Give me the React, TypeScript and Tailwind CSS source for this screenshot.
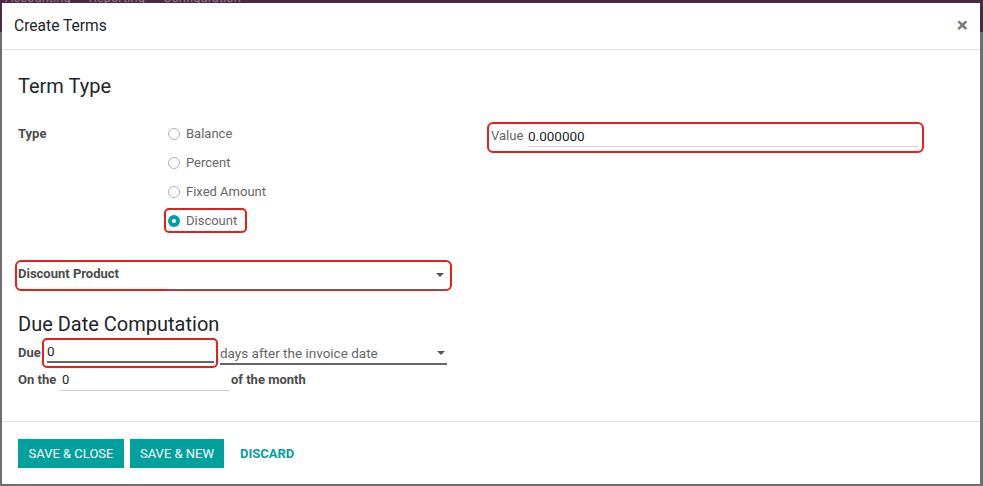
import React from "react";

const TEAL = "#00a09d";

function Radio({ label, checked = false }: { label: string; checked?: boolean }) {
  return (
    <div className="flex items-center gap-[6px]">
      {checked ? (
        <span className="w-[12px] h-[12px] rounded-full bg-[#00a09d] flex items-center justify-center">
          <span className="w-[4px] h-[4px] rounded-full bg-white" />
        </span>
      ) : (
        <span className="w-[12px] h-[12px] rounded-full border border-[#adb5bd] bg-white" />
      )}
      <span className="text-[#666666]">{label}</span>
    </div>
  );
}

function Caret() {
  return (
    <span className="w-0 h-0 border-l-[4px] border-r-[4px] border-t-[4px] border-l-transparent border-r-transparent border-t-[#555]" />
  );
}

export default function App() {
  return (
    <div className="relative w-full h-[486px] overflow-hidden bg-[#6f6f6f] font-['Roboto',sans-serif] text-[13px]">
      {/* app navbar behind the dialog */}
      <div className="h-[32px] bg-[#4a2a42] flex gap-[18px] pl-[5px] text-[13px] text-[#8f7b89] leading-none">
        <span className="-mt-[9px]">Accounting</span>
        <span className="-mt-[9px]">Reporting</span>
        <span className="-mt-[9px]">Configuration</span>
      </div>

      {/* dialog */}
      <div className="absolute left-[2px] top-[3px] w-[978px] h-[481px] bg-white flex flex-col">
        {/* header */}
        <div className="h-[47px] shrink-0 flex items-center justify-between pl-[12px] pr-[12px] pt-[2px] border-b border-[#dee2e6]">
          <span className="text-[15.6px] text-[#212529]">Create Terms</span>
          <span className="text-[21px] font-bold text-[#7a7a7a] leading-none -mt-[4px]">×</span>
        </div>

        {/* body */}
        <div className="flex-1 pl-[13px] pt-[24px]">
          <div className="h-[24px] flex items-center pl-[3px] text-[20px] text-[#212529]">Term Type</div>

          <div className="mt-[21px] flex">
            <div className="w-[472px] flex">
              <div className="w-[153px] pl-[3px] h-[29px] flex items-center font-bold text-[#4c4c4c]">Type</div>
              <div className="flex flex-col">
                <div className="h-[29px] flex items-center"><Radio label="Balance" /></div>
                <div className="h-[29px] flex items-center"><Radio label="Percent" /></div>
                <div className="h-[29px] flex items-center"><Radio label="Fixed Amount" /></div>
                <div className="h-[29px] flex items-center">
                  <div className="-ml-[4px] h-[25px] w-[83px] pl-[2px] flex items-center border-2 border-[#e3201c] rounded-[5px]">
                    <Radio label="Discount" checked />
                  </div>
                </div>
              </div>
            </div>
            <div className="mt-[3px] w-[437px] h-[31px] flex items-center pl-[2px] pr-[4px] border-2 border-[#e3201c] rounded-[6px]">
              <span className="w-[37px] text-[#666666] -mt-[3px]">Value</span>
              <div className="flex-1 h-[20px] flex items-center border-b border-[#cfcfcf] text-[#212529] text-[13.5px] -mt-[1px]">0.000000</div>
            </div>
          </div>

          {/* discount product */}
          <div className="mt-[25px] w-[437px] h-[31px] flex items-center pl-[1px] pr-[4px] border-2 border-[#e3201c] rounded-[6px]">
            <span className="w-[150px] font-bold text-[#4c4c4c] -mt-[4px]">Discount Product</span>
            <div className="flex-1 h-[24px] mt-[4px] flex items-start justify-end pr-[2px] pt-[7px] border-b border-[#666]">
              <Caret />
            </div>
          </div>

          <div className="mt-[21px] h-[24px] flex items-center pl-[3px] text-[20px] text-[#212529]">Due Date Computation</div>

          {/* due row */}
          <div className="mt-[2px] flex items-center">
            <span className="pl-[3px] w-[27px] font-bold text-[#4c4c4c]">Due</span>
            <div className="w-[176px] h-[30px] flex items-center pl-[3px] pr-[2px] border-2 border-[#e3201c] rounded-[5px]">
              <div className="flex-1 h-[21px] flex items-center border-b-2 border-[#666] text-[#212529] text-[13.5px] -mt-[2px]">0</div>
            </div>
            <div className="ml-[2px] w-[227px] h-[21px] flex items-center justify-between pr-[2px] border-b-2 border-[#666] text-[#666666] text-[13.5px] mt-[2px]">
              <span>days after the invoice date</span>
              <Caret />
            </div>
          </div>

          {/* on the row */}
          <div className="mt-[1px] flex items-center h-[22px]">
            <span className="pl-[3px] w-[45px] font-bold text-[#4c4c4c]">On the</span>
            <div className="w-[169px] h-[20px] flex items-center pl-[2px] border-b border-[#cfcfcf] text-[#212529] mt-[1px]">0</div>
            <span className="ml-[2px] font-bold text-[#4c4c4c]">of the month</span>
          </div>
        </div>

        {/* footer */}
        <div className="h-[63px] shrink-0 border-t border-[#dee2e6] flex items-start pt-[17px] pl-[16px] gap-[6px]">
          <button className="h-[29px] w-[106px] text-[13px] text-white bg-[#00a09d]">SAVE &amp; CLOSE</button>
          <button className="h-[29px] w-[94px] text-[13px] text-white bg-[#00a09d]">SAVE &amp; NEW</button>
          <button className="h-[29px] px-[10px] text-[13px] font-bold" style={{ color: TEAL }}>DISCARD</button>
        </div>
      </div>
    </div>
  );
}
